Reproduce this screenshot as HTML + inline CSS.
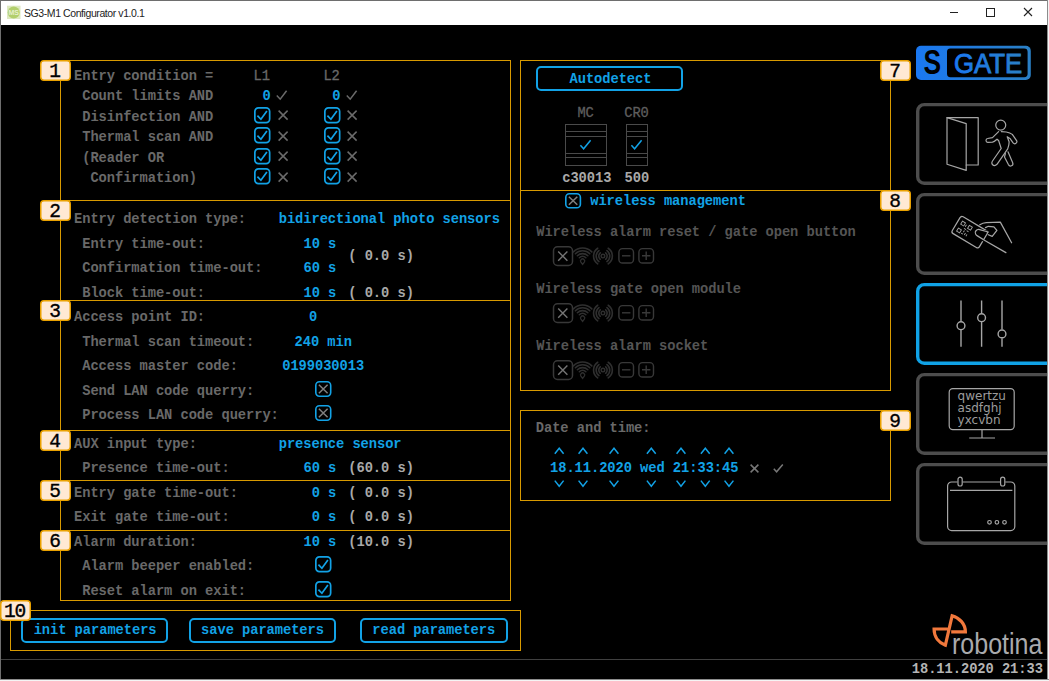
<!DOCTYPE html>
<html><head><meta charset="utf-8"><title>SG3-M1 Configurator v1.0.1</title>
<style>
html,body{margin:0;padding:0;}
body{width:1049px;height:681px;background:#000;position:relative;overflow:hidden;font-family:"Liberation Mono",monospace;}
#frame{position:absolute;left:0;top:0;width:1047px;height:679px;overflow:hidden;}
#edge-l{position:absolute;left:0;top:0;width:1px;height:681px;background:#6e6e6e}
#edge-t{position:absolute;left:0;top:0;width:1049px;height:1px;background:#6e6e6e}
#edge-r{position:absolute;left:1047px;top:0;width:1px;height:681px;background:#8c8c8c}
#edge-r2{position:absolute;left:1048px;top:0;width:1px;height:681px;background:#f4f4f4}
#edge-b{position:absolute;left:0;top:679px;width:1049px;height:1px;background:#8c8c8c}
#edge-b2{position:absolute;left:0;top:680px;width:1049px;height:1px;background:#f4f4f4}
#titlebar{position:absolute;left:1px;top:1px;width:1046px;height:24px;background:#fff}
#title{position:absolute;left:24px;top:6px;font:10.5px/14px "Liberation Sans",sans-serif;color:#222;white-space:pre;letter-spacing:-0.42px}
.t{position:absolute;font-size:13.75px;line-height:16px;letter-spacing:-0.06px;white-space:pre;font-family:"Liberation Mono",monospace}
.b{font-weight:bold} .r{font-weight:normal;-webkit-text-stroke:0.3px currentColor}
.p{position:absolute;border:1px solid #d89a00;}
.lb{position:absolute;width:28px;height:16px;padding-top:2px;z-index:5;border:1.5px solid #e9a100;border-radius:3.5px;background:#ffe9d3;color:#000;font:19.5px/19px "Liberation Mono",monospace;text-align:center;-webkit-text-stroke:0.35px #000;}
.i{position:absolute;overflow:visible}
svg.clip{overflow:hidden}
.lbs{z-index:5}
.btn{position:absolute;box-sizing:border-box;border:2px solid #12a2e6;border-radius:5px;color:#12a2e6;font:bold 13.75px/16px "Liberation Mono",monospace;text-align:center;white-space:pre;letter-spacing:-0.06px}
.sb{position:absolute;left:916px;width:140px;height:82px;box-sizing:border-box;border:3.5px solid #4d4d4d;border-radius:9px}
#robotina{position:absolute;left:952px;top:626px;font:28.8px/36px "Liberation Sans",sans-serif;color:#a9aaad;transform-origin:0 0;transform:scaleX(0.869);white-space:pre}
#sline{position:absolute;left:1px;top:659px;width:1046px;height:1px;background:#404040}
</style></head>
<body>
<div id="frame">
<div id="titlebar"></div>
<svg class="i" style="left:7px;top:5px" width="14" height="15" viewBox="0 0 14 15"><rect x="0" y="0.7" width="13.5" height="13.3" fill="#dde9c0"/><circle cx="6.7" cy="7.4" r="6" fill="#b2cf6c"/><text x="6.7" y="10" font-family="Liberation Sans, sans-serif" font-size="7" font-weight="bold" fill="#e6f0cc" text-anchor="middle">MS</text></svg>
<div id="title">SG3-M1 Configurator v1.0.1</div>
<svg class="i" style="left:940px;top:1px" width="107" height="24" viewBox="0 0 107 24"><path d="M10 11.5 H18" stroke="#222" stroke-width="1"/><rect x="46.5" y="7.5" width="8" height="8" fill="none" stroke="#222" stroke-width="1"/><path d="M84 7 L92 15 M92 7 L84 15" stroke="#222" stroke-width="1.1"/></svg>
<div class="p" style="left:60px;top:60px;width:449px;height:139px"></div>
<div class="p" style="left:60px;top:200px;width:449px;height:99px"></div>
<div class="p" style="left:60px;top:300px;width:449px;height:129px"></div>
<div class="p" style="left:60px;top:430px;width:449px;height:49px"></div>
<div class="p" style="left:60px;top:480px;width:449px;height:49px"></div>
<div class="p" style="left:60px;top:530px;width:449px;height:69px"></div>
<div class="p" style="left:10px;top:610px;width:509px;height:39px"></div>
<div class="p" style="left:520px;top:60px;width:369px;height:129px"></div>
<div class="p" style="left:520px;top:190px;width:369px;height:199px"></div>
<div class="p" style="left:520px;top:410px;width:369px;height:89px"></div>
<svg class="i lbs" style="left:40px;top:60px" width="31" height="21" viewBox="0 0 31 21"><rect x="0.75" y="0.75" width="29.5" height="19.5" rx="3.2" fill="#ffe9d3" stroke="#e9a100" stroke-width="1.5"/><text x="15.0" y="17" text-anchor="middle" font-family="Liberation Mono, monospace" font-size="19.5" fill="#000" stroke="#000" stroke-width="0.35">1</text></svg>
<svg class="i lbs" style="left:40px;top:200px" width="31" height="21" viewBox="0 0 31 21"><rect x="0.75" y="0.75" width="29.5" height="19.5" rx="3.2" fill="#ffe9d3" stroke="#e9a100" stroke-width="1.5"/><text x="15.0" y="17" text-anchor="middle" font-family="Liberation Mono, monospace" font-size="19.5" fill="#000" stroke="#000" stroke-width="0.35">2</text></svg>
<svg class="i lbs" style="left:40px;top:300px" width="31" height="21" viewBox="0 0 31 21"><rect x="0.75" y="0.75" width="29.5" height="19.5" rx="3.2" fill="#ffe9d3" stroke="#e9a100" stroke-width="1.5"/><text x="15.0" y="17" text-anchor="middle" font-family="Liberation Mono, monospace" font-size="19.5" fill="#000" stroke="#000" stroke-width="0.35">3</text></svg>
<svg class="i lbs" style="left:40px;top:430px" width="31" height="21" viewBox="0 0 31 21"><rect x="0.75" y="0.75" width="29.5" height="19.5" rx="3.2" fill="#ffe9d3" stroke="#e9a100" stroke-width="1.5"/><text x="15.0" y="17" text-anchor="middle" font-family="Liberation Mono, monospace" font-size="19.5" fill="#000" stroke="#000" stroke-width="0.35">4</text></svg>
<svg class="i lbs" style="left:40px;top:480px" width="31" height="21" viewBox="0 0 31 21"><rect x="0.75" y="0.75" width="29.5" height="19.5" rx="3.2" fill="#ffe9d3" stroke="#e9a100" stroke-width="1.5"/><text x="15.0" y="17" text-anchor="middle" font-family="Liberation Mono, monospace" font-size="19.5" fill="#000" stroke="#000" stroke-width="0.35">5</text></svg>
<svg class="i lbs" style="left:40px;top:530px" width="31" height="21" viewBox="0 0 31 21"><rect x="0.75" y="0.75" width="29.5" height="19.5" rx="3.2" fill="#ffe9d3" stroke="#e9a100" stroke-width="1.5"/><text x="15.0" y="17" text-anchor="middle" font-family="Liberation Mono, monospace" font-size="19.5" fill="#000" stroke="#000" stroke-width="0.35">6</text></svg>
<svg class="i lbs" style="left:880px;top:60px" width="31" height="21" viewBox="0 0 31 21"><rect x="0.75" y="0.75" width="29.5" height="19.5" rx="3.2" fill="#ffe9d3" stroke="#e9a100" stroke-width="1.5"/><text x="15.0" y="17" text-anchor="middle" font-family="Liberation Mono, monospace" font-size="19.5" fill="#000" stroke="#000" stroke-width="0.35">7</text></svg>
<svg class="i lbs" style="left:880px;top:190px" width="31" height="21" viewBox="0 0 31 21"><rect x="0.75" y="0.75" width="29.5" height="19.5" rx="3.2" fill="#ffe9d3" stroke="#e9a100" stroke-width="1.5"/><text x="15.0" y="17" text-anchor="middle" font-family="Liberation Mono, monospace" font-size="19.5" fill="#000" stroke="#000" stroke-width="0.35">8</text></svg>
<svg class="i lbs" style="left:880px;top:410px" width="31" height="21" viewBox="0 0 31 21"><rect x="0.75" y="0.75" width="29.5" height="19.5" rx="3.2" fill="#ffe9d3" stroke="#e9a100" stroke-width="1.5"/><text x="15.0" y="17" text-anchor="middle" font-family="Liberation Mono, monospace" font-size="19.5" fill="#000" stroke="#000" stroke-width="0.35">9</text></svg>
<svg class="i lbs" style="left:0.4px;top:600px" width="31" height="21" viewBox="0 0 31 21"><rect x="0.75" y="0.75" width="29.5" height="19.5" rx="3.2" fill="#ffe9d3" stroke="#e9a100" stroke-width="1.5"/><text x="14.4" y="17" text-anchor="middle" letter-spacing="-1.2" font-family="Liberation Mono, monospace" font-size="19.5" fill="#000" stroke="#000" stroke-width="0.35">10</text></svg>
<div class="t b " style="left:74.00px;top:69px;color:#696969">Entry condition =</div>
<div class="t b " style="left:74.00px;top:89px;color:#696969"> Count limits AND</div>
<div class="t b " style="left:74.00px;top:110px;color:#696969"> Disinfection AND</div>
<div class="t b " style="left:74.00px;top:130px;color:#696969"> Thermal scan AND</div>
<div class="t b " style="left:74.00px;top:151px;color:#696969"> (Reader OR</div>
<div class="t b " style="left:74.00px;top:171px;color:#696969">  Confirmation)</div>
<div class="t r " style="left:253.60px;top:69px;color:#696969">L1</div>
<div class="t r " style="left:323.40px;top:69px;color:#696969">L2</div>
<div class="t b " style="left:262.39px;top:89px;color:#12a2e6">0</div>
<div class="t b " style="left:332.19px;top:89px;color:#12a2e6">0</div>
<svg class="i" style="left:276.4px;top:90.1px" width="12" height="11" viewBox="0 0 12 11"><path d="M0.8 5.6 L4.2 9.2 L10.6 0.8" fill="none" stroke="#6a6a6a" stroke-width="1.5"/></svg>
<svg class="i" style="left:346.2px;top:90.1px" width="12" height="11" viewBox="0 0 12 11"><path d="M0.8 5.6 L4.2 9.2 L10.6 0.8" fill="none" stroke="#6a6a6a" stroke-width="1.5"/></svg>
<svg class="i" style="left:254px;top:107.0px" width="18" height="18" viewBox="0 0 18 18"><rect x="0.85" y="0.85" width="14.8" height="14.8" rx="3.6" fill="none" stroke="#12a2e6" stroke-width="1.7"/><path d="M3.4 8.7 L6.9 12.3 L12.9 3.9" fill="none" stroke="#12a2e6" stroke-width="1.7"/></svg>
<svg class="i" style="left:323.8px;top:107.0px" width="18" height="18" viewBox="0 0 18 18"><rect x="0.85" y="0.85" width="14.8" height="14.8" rx="3.6" fill="none" stroke="#12a2e6" stroke-width="1.7"/><path d="M3.4 8.7 L6.9 12.3 L12.9 3.9" fill="none" stroke="#12a2e6" stroke-width="1.7"/></svg>
<svg class="i" style="left:277.6px;top:110.4px" width="11" height="11" viewBox="0 0 11 11"><path d="M0.6 0.6 L9.6 9.6 M9.6 0.6 L0.6 9.6" fill="none" stroke="#6a6a6a" stroke-width="1.5"/></svg>
<svg class="i" style="left:347.2px;top:110.4px" width="11" height="11" viewBox="0 0 11 11"><path d="M0.6 0.6 L9.6 9.6 M9.6 0.6 L0.6 9.6" fill="none" stroke="#6a6a6a" stroke-width="1.5"/></svg>
<svg class="i" style="left:254px;top:127.4px" width="18" height="18" viewBox="0 0 18 18"><rect x="0.85" y="0.85" width="14.8" height="14.8" rx="3.6" fill="none" stroke="#12a2e6" stroke-width="1.7"/><path d="M3.4 8.7 L6.9 12.3 L12.9 3.9" fill="none" stroke="#12a2e6" stroke-width="1.7"/></svg>
<svg class="i" style="left:323.8px;top:127.4px" width="18" height="18" viewBox="0 0 18 18"><rect x="0.85" y="0.85" width="14.8" height="14.8" rx="3.6" fill="none" stroke="#12a2e6" stroke-width="1.7"/><path d="M3.4 8.7 L6.9 12.3 L12.9 3.9" fill="none" stroke="#12a2e6" stroke-width="1.7"/></svg>
<svg class="i" style="left:277.6px;top:130.8px" width="11" height="11" viewBox="0 0 11 11"><path d="M0.6 0.6 L9.6 9.6 M9.6 0.6 L0.6 9.6" fill="none" stroke="#6a6a6a" stroke-width="1.5"/></svg>
<svg class="i" style="left:347.2px;top:130.8px" width="11" height="11" viewBox="0 0 11 11"><path d="M0.6 0.6 L9.6 9.6 M9.6 0.6 L0.6 9.6" fill="none" stroke="#6a6a6a" stroke-width="1.5"/></svg>
<svg class="i" style="left:254px;top:147.8px" width="18" height="18" viewBox="0 0 18 18"><rect x="0.85" y="0.85" width="14.8" height="14.8" rx="3.6" fill="none" stroke="#12a2e6" stroke-width="1.7"/><path d="M3.4 8.7 L6.9 12.3 L12.9 3.9" fill="none" stroke="#12a2e6" stroke-width="1.7"/></svg>
<svg class="i" style="left:323.8px;top:147.8px" width="18" height="18" viewBox="0 0 18 18"><rect x="0.85" y="0.85" width="14.8" height="14.8" rx="3.6" fill="none" stroke="#12a2e6" stroke-width="1.7"/><path d="M3.4 8.7 L6.9 12.3 L12.9 3.9" fill="none" stroke="#12a2e6" stroke-width="1.7"/></svg>
<svg class="i" style="left:277.6px;top:151.2px" width="11" height="11" viewBox="0 0 11 11"><path d="M0.6 0.6 L9.6 9.6 M9.6 0.6 L0.6 9.6" fill="none" stroke="#6a6a6a" stroke-width="1.5"/></svg>
<svg class="i" style="left:347.2px;top:151.2px" width="11" height="11" viewBox="0 0 11 11"><path d="M0.6 0.6 L9.6 9.6 M9.6 0.6 L0.6 9.6" fill="none" stroke="#6a6a6a" stroke-width="1.5"/></svg>
<svg class="i" style="left:254px;top:168.2px" width="18" height="18" viewBox="0 0 18 18"><rect x="0.85" y="0.85" width="14.8" height="14.8" rx="3.6" fill="none" stroke="#12a2e6" stroke-width="1.7"/><path d="M3.4 8.7 L6.9 12.3 L12.9 3.9" fill="none" stroke="#12a2e6" stroke-width="1.7"/></svg>
<svg class="i" style="left:323.8px;top:168.2px" width="18" height="18" viewBox="0 0 18 18"><rect x="0.85" y="0.85" width="14.8" height="14.8" rx="3.6" fill="none" stroke="#12a2e6" stroke-width="1.7"/><path d="M3.4 8.7 L6.9 12.3 L12.9 3.9" fill="none" stroke="#12a2e6" stroke-width="1.7"/></svg>
<svg class="i" style="left:277.6px;top:171.6px" width="11" height="11" viewBox="0 0 11 11"><path d="M0.6 0.6 L9.6 9.6 M9.6 0.6 L0.6 9.6" fill="none" stroke="#6a6a6a" stroke-width="1.5"/></svg>
<svg class="i" style="left:347.2px;top:171.6px" width="11" height="11" viewBox="0 0 11 11"><path d="M0.6 0.6 L9.6 9.6 M9.6 0.6 L0.6 9.6" fill="none" stroke="#6a6a6a" stroke-width="1.5"/></svg>
<div class="t b " style="left:74.00px;top:212px;color:#696969">Entry detection type:</div>
<div class="t b " style="left:74.00px;top:237px;color:#696969"> Entry time-out:</div>
<div class="t b " style="left:74.00px;top:261px;color:#696969"> Confirmation time-out:</div>
<div class="t b " style="left:74.00px;top:286px;color:#696969"> Block time-out:</div>
<div class="t b " style="left:278.70px;top:212px;color:#12a2e6">bidirectional photo sensors</div>
<div class="t b " style="left:303.47px;top:237px;color:#12a2e6">10 s</div>
<div class="t b " style="left:303.47px;top:261px;color:#12a2e6">60 s</div>
<div class="t b " style="left:303.47px;top:286px;color:#12a2e6">10 s</div>
<div class="t b " style="left:348.30px;top:249px;color:#a9a9a9">( 0.0 s)</div>
<div class="t b " style="left:348.30px;top:286px;color:#a9a9a9">( 0.0 s)</div>
<div class="t b " style="left:74.00px;top:310px;color:#696969">Access point ID:</div>
<div class="t b " style="left:74.00px;top:335px;color:#696969"> Thermal scan timeout:</div>
<div class="t b " style="left:74.00px;top:359px;color:#696969"> Access master code:</div>
<div class="t b " style="left:74.00px;top:384px;color:#696969"> Send LAN code querry:</div>
<div class="t b " style="left:74.00px;top:408px;color:#696969"> Process LAN code querry:</div>
<div class="t b " style="left:309.00px;top:310px;color:#12a2e6">0</div>
<div class="t b " style="left:294.60px;top:335px;color:#12a2e6">240 min</div>
<div class="t b " style="left:282.20px;top:359px;color:#12a2e6">0199030013</div>
<svg class="i" style="left:315.4px;top:381.2px" width="18" height="18" viewBox="0 0 18 18"><rect x="0.8" y="0.8" width="14.9" height="14.4" rx="3.6" fill="none" stroke="#12a2e6" stroke-width="1.6"/><path d="M3.9 3.8 L12.6 12.2 M12.6 3.8 L3.9 12.2" fill="none" stroke="#808080" stroke-width="1.5"/></svg>
<svg class="i" style="left:315.4px;top:405.2px" width="18" height="18" viewBox="0 0 18 18"><rect x="0.8" y="0.8" width="14.9" height="14.4" rx="3.6" fill="none" stroke="#12a2e6" stroke-width="1.6"/><path d="M3.9 3.8 L12.6 12.2 M12.6 3.8 L3.9 12.2" fill="none" stroke="#808080" stroke-width="1.5"/></svg>
<div class="t b " style="left:74.00px;top:437px;color:#696969">AUX input type:</div>
<div class="t b " style="left:74.00px;top:461px;color:#696969"> Presence time-out:</div>
<div class="t b " style="left:74.00px;top:486px;color:#696969">Entry gate time-out:</div>
<div class="t b " style="left:74.00px;top:510px;color:#696969">Exit gate time-out:</div>
<div class="t b " style="left:74.00px;top:535px;color:#696969">Alarm duration:</div>
<div class="t b " style="left:74.00px;top:559px;color:#696969"> Alarm beeper enabled:</div>
<div class="t b " style="left:74.00px;top:584px;color:#696969"> Reset alarm on exit:</div>
<div class="t b " style="left:278.70px;top:437px;color:#12a2e6">presence sensor</div>
<div class="t b " style="left:303.47px;top:461px;color:#12a2e6">60 s</div>
<div class="t b " style="left:303.47px;top:486px;color:#12a2e6"> 0 s</div>
<div class="t b " style="left:303.47px;top:510px;color:#12a2e6"> 0 s</div>
<div class="t b " style="left:303.47px;top:535px;color:#12a2e6">10 s</div>
<div class="t b " style="left:348.30px;top:461px;color:#a9a9a9">(60.0 s)</div>
<div class="t b " style="left:348.30px;top:486px;color:#a9a9a9">( 0.0 s)</div>
<div class="t b " style="left:348.30px;top:510px;color:#a9a9a9">( 0.0 s)</div>
<div class="t b " style="left:348.30px;top:535px;color:#a9a9a9">(10.0 s)</div>
<svg class="i" style="left:315.4px;top:556.2px" width="18" height="18" viewBox="0 0 18 18"><rect x="0.85" y="0.85" width="14.8" height="14.8" rx="3.6" fill="none" stroke="#12a2e6" stroke-width="1.7"/><path d="M3.4 8.7 L6.9 12.3 L12.9 3.9" fill="none" stroke="#12a2e6" stroke-width="1.7"/></svg>
<svg class="i" style="left:315.4px;top:580.7px" width="18" height="18" viewBox="0 0 18 18"><rect x="0.85" y="0.85" width="14.8" height="14.8" rx="3.6" fill="none" stroke="#12a2e6" stroke-width="1.7"/><path d="M3.4 8.7 L6.9 12.3 L12.9 3.9" fill="none" stroke="#12a2e6" stroke-width="1.7"/></svg>
<div class="btn" style="left:21px;top:618px;width:147px;height:25px;padding-top:3px;padding-left:1.2px">init parameters</div>
<div class="btn" style="left:189px;top:618px;width:147px;height:25px;padding-top:3px;padding-left:0px">save parameters</div>
<div class="btn" style="left:360px;top:618px;width:147.5px;height:25px;padding-top:3px;padding-left:0px">read parameters</div>
<div class="btn" style="left:536px;top:66px;width:147px;height:25px;padding-top:4px;padding-left:2px">Autodetect</div>
<div class="t r " style="left:577.40px;top:106px;color:#5e5e5e">MC</div>
<div class="t r " style="left:624.20px;top:106px;color:#5e5e5e">CR0</div>
<svg class="i" style="left:565px;top:120px" width="44" height="50" viewBox="0 0 44 50"><rect x="0.5" y="4.5" width="41" height="41" fill="none" stroke="#4a4a4a" stroke-width="1"/><path d="M0.5 11.5 H41.5" stroke="#4a4a4a" stroke-width="1"/><path d="M0.5 16.5 H41.5" stroke="#4a4a4a" stroke-width="1"/><path d="M0.5 33.5 H41.5" stroke="#4a4a4a" stroke-width="1"/><path d="M0.5 37.5 H41.5" stroke="#4a4a4a" stroke-width="1"/><path d="M15.4 25.30000000000001 L18.6 28.80000000000001 L25.6 20.19999999999999" fill="none" stroke="#12a2e6" stroke-width="1.5"/></svg>
<svg class="i" style="left:626px;top:120px" width="24" height="50" viewBox="0 0 24 50"><rect x="0.5" y="4.5" width="21" height="41" fill="none" stroke="#4a4a4a" stroke-width="1"/><path d="M0.5 11.5 H21.5" stroke="#4a4a4a" stroke-width="1"/><path d="M0.5 16.5 H21.5" stroke="#4a4a4a" stroke-width="1"/><path d="M0.5 33.5 H21.5" stroke="#4a4a4a" stroke-width="1"/><path d="M0.5 37.5 H21.5" stroke="#4a4a4a" stroke-width="1"/><path d="M5.4 25.30000000000001 L8.6 28.80000000000001 L15.6 20.19999999999999" fill="none" stroke="#12a2e6" stroke-width="1.5"/></svg>
<div class="t b " style="left:562.20px;top:171px;color:#a9a9a9">c30013</div>
<div class="t b " style="left:624.60px;top:171px;color:#a9a9a9">500</div>
<svg class="i" style="left:565.2px;top:193.4px" width="18" height="18" viewBox="0 0 18 18"><rect x="0.8" y="0.8" width="14.6" height="14.0" rx="3.6" fill="none" stroke="#12a2e6" stroke-width="1.6"/><path d="M3.9 3.8 L12.299999999999999 11.8 M12.299999999999999 3.8 L3.9 11.8" fill="none" stroke="#808080" stroke-width="1.5"/></svg>
<div class="t b " style="left:590.20px;top:194px;color:#12a2e6">wireless management</div>
<div class="t b " style="left:536.20px;top:225px;color:#555555">Wireless alarm reset / gate open button</div>
<div class="t b " style="left:536.20px;top:282px;color:#555555">Wireless gate open module</div>
<div class="t b " style="left:536.20px;top:339px;color:#555555">Wireless alarm socket</div>
<svg class="i" style="left:552px;top:246px" width="106" height="21" viewBox="0 0 106 21"><rect x="1.5" y="0.8" width="19" height="18.6" rx="4" fill="none" stroke="#383838" stroke-width="1.5"/><path d="M6.2 5.4 L15.4 14.8 M15.4 5.4 L6.2 14.8" stroke="#747474" stroke-width="1.4" fill="none"/><g fill="none" stroke="#2f2f2f" stroke-width="1.6" stroke-linecap="round"><path d="M21.41 5.81 A13.0 13.0 0 0 1 39.79 5.81"/><path d="M23.39 7.79 A10.2 10.2 0 0 1 37.81 7.79"/><path d="M25.37 9.77 A7.4 7.4 0 0 1 35.83 9.77"/><path d="M27.35 11.75 A4.6 4.6 0 0 1 33.85 11.75"/><path d="M30.6 18.4 L28.900000000000002 16.2 A2.1 2.1 0 1 1 32.300000000000004 16.2 Z" stroke-width="1.3"/><circle cx="50.95" cy="10.05" r="1.8" stroke-width="1.4"/><path d="M48.25 6.83 A4.2 4.2 0 0 0 48.25 13.27"/><path d="M53.65 6.83 A4.2 4.2 0 0 1 53.65 13.27"/><path d="M46.95 4.55 A6.8 6.8 0 0 0 46.95 15.55"/><path d="M54.95 4.55 A6.8 6.8 0 0 1 54.95 15.55"/><path d="M45.69 2.26 A9.4 9.4 0 0 0 45.69 17.84"/><path d="M56.21 2.26 A9.4 9.4 0 0 1 56.21 17.84"/></g><rect x="66.9" y="2.6" width="14.6" height="14.4" rx="3.6" fill="none" stroke="#383838" stroke-width="1.4"/><path d="M70 9.8 H78.4" stroke="#383838" stroke-width="1.4"/><rect x="86.9" y="2.6" width="14.6" height="14.4" rx="3.6" fill="none" stroke="#383838" stroke-width="1.4"/><path d="M90 9.8 H98.4 M94.2 5.6 V14" stroke="#383838" stroke-width="1.4"/></svg>
<svg class="i" style="left:552px;top:303.2px" width="106" height="21" viewBox="0 0 106 21"><rect x="1.5" y="0.8" width="19" height="18.6" rx="4" fill="none" stroke="#383838" stroke-width="1.5"/><path d="M6.2 5.4 L15.4 14.8 M15.4 5.4 L6.2 14.8" stroke="#747474" stroke-width="1.4" fill="none"/><g fill="none" stroke="#2f2f2f" stroke-width="1.6" stroke-linecap="round"><path d="M21.41 5.81 A13.0 13.0 0 0 1 39.79 5.81"/><path d="M23.39 7.79 A10.2 10.2 0 0 1 37.81 7.79"/><path d="M25.37 9.77 A7.4 7.4 0 0 1 35.83 9.77"/><path d="M27.35 11.75 A4.6 4.6 0 0 1 33.85 11.75"/><path d="M30.6 18.4 L28.900000000000002 16.2 A2.1 2.1 0 1 1 32.300000000000004 16.2 Z" stroke-width="1.3"/><circle cx="50.95" cy="10.05" r="1.8" stroke-width="1.4"/><path d="M48.25 6.83 A4.2 4.2 0 0 0 48.25 13.27"/><path d="M53.65 6.83 A4.2 4.2 0 0 1 53.65 13.27"/><path d="M46.95 4.55 A6.8 6.8 0 0 0 46.95 15.55"/><path d="M54.95 4.55 A6.8 6.8 0 0 1 54.95 15.55"/><path d="M45.69 2.26 A9.4 9.4 0 0 0 45.69 17.84"/><path d="M56.21 2.26 A9.4 9.4 0 0 1 56.21 17.84"/></g><rect x="66.9" y="2.6" width="14.6" height="14.4" rx="3.6" fill="none" stroke="#383838" stroke-width="1.4"/><path d="M70 9.8 H78.4" stroke="#383838" stroke-width="1.4"/><rect x="86.9" y="2.6" width="14.6" height="14.4" rx="3.6" fill="none" stroke="#383838" stroke-width="1.4"/><path d="M90 9.8 H98.4 M94.2 5.6 V14" stroke="#383838" stroke-width="1.4"/></svg>
<svg class="i" style="left:552px;top:360.4px" width="106" height="21" viewBox="0 0 106 21"><rect x="1.5" y="0.8" width="19" height="18.6" rx="4" fill="none" stroke="#383838" stroke-width="1.5"/><path d="M6.2 5.4 L15.4 14.8 M15.4 5.4 L6.2 14.8" stroke="#747474" stroke-width="1.4" fill="none"/><g fill="none" stroke="#2f2f2f" stroke-width="1.6" stroke-linecap="round"><path d="M21.41 5.81 A13.0 13.0 0 0 1 39.79 5.81"/><path d="M23.39 7.79 A10.2 10.2 0 0 1 37.81 7.79"/><path d="M25.37 9.77 A7.4 7.4 0 0 1 35.83 9.77"/><path d="M27.35 11.75 A4.6 4.6 0 0 1 33.85 11.75"/><path d="M30.6 18.4 L28.900000000000002 16.2 A2.1 2.1 0 1 1 32.300000000000004 16.2 Z" stroke-width="1.3"/><circle cx="50.95" cy="10.05" r="1.8" stroke-width="1.4"/><path d="M48.25 6.83 A4.2 4.2 0 0 0 48.25 13.27"/><path d="M53.65 6.83 A4.2 4.2 0 0 1 53.65 13.27"/><path d="M46.95 4.55 A6.8 6.8 0 0 0 46.95 15.55"/><path d="M54.95 4.55 A6.8 6.8 0 0 1 54.95 15.55"/><path d="M45.69 2.26 A9.4 9.4 0 0 0 45.69 17.84"/><path d="M56.21 2.26 A9.4 9.4 0 0 1 56.21 17.84"/></g><rect x="66.9" y="2.6" width="14.6" height="14.4" rx="3.6" fill="none" stroke="#383838" stroke-width="1.4"/><path d="M70 9.8 H78.4" stroke="#383838" stroke-width="1.4"/><rect x="86.9" y="2.6" width="14.6" height="14.4" rx="3.6" fill="none" stroke="#383838" stroke-width="1.4"/><path d="M90 9.8 H98.4 M94.2 5.6 V14" stroke="#383838" stroke-width="1.4"/></svg>
<div class="t b " style="left:535.80px;top:421px;color:#696969">Date and time:</div>
<div class="t b " style="left:550.00px;top:461px;color:#12a2e6">18.11.2020 wed 21:33:45</div>
<svg class="i" style="left:540px;top:440px" width="220" height="52" viewBox="0 0 220 52"><g fill="none" stroke="#12a2e6" stroke-width="1.5"><path d="M14.8 13.8 L19.2 8.2 L23.6 13.8"/><path d="M14.8 40.6 L19.2 46.2 L23.6 40.6"/><path d="M38.6 13.8 L43.0 8.2 L47.4 13.8"/><path d="M38.6 40.6 L43.0 46.2 L47.4 40.6"/><path d="M69.6 13.8 L74.0 8.2 L78.4 13.8"/><path d="M69.6 40.6 L74.0 46.2 L78.4 40.6"/><path d="M106.9 13.8 L111.3 8.2 L115.7 13.8"/><path d="M106.9 40.6 L111.3 46.2 L115.7 40.6"/><path d="M136.6 13.8 L141.0 8.2 L145.4 13.8"/><path d="M136.6 40.6 L141.0 46.2 L145.4 40.6"/><path d="M160.9 13.8 L165.3 8.2 L169.7 13.8"/><path d="M160.9 40.6 L165.3 46.2 L169.7 40.6"/><path d="M184.6 13.8 L189.0 8.2 L193.4 13.8"/><path d="M184.6 40.6 L189.0 46.2 L193.4 40.6"/></g></svg>
<svg class="i" style="left:750px;top:464.2px" width="11" height="11" viewBox="0 0 11 11"><path d="M0.6 0.6 L8.4 8.4 M8.4 0.6 L0.6 8.4" fill="none" stroke="#777" stroke-width="1.5"/></svg>
<svg class="i" style="left:773px;top:463px" width="12" height="11" viewBox="0 0 12 11"><path d="M0.8 5.8 L3.6 8.8 L9.8 1.4" fill="none" stroke="#777" stroke-width="1.5"/></svg>
<svg class="i" style="left:914px;top:43px" width="120" height="40" viewBox="0 0 120 40">
<defs><linearGradient id="lg" x1="0" x2="1" y1="0" y2="0"><stop offset="0" stop-color="#1a78f2"/><stop offset="1" stop-color="#2a7fc4"/></linearGradient></defs>
<rect x="2" y="2.8" width="114.8" height="34.2" rx="5" fill="url(#lg)"/>
<rect x="33" y="5.4" width="80.6" height="28.8" rx="3.4" fill="#000"/>
<text x="9.6" y="31.3" font-family="Liberation Sans, sans-serif" font-weight="bold" font-size="34.6" textLength="17.6" lengthAdjust="spacingAndGlyphs" fill="#000">S</text>
<text x="40" y="30.2" font-family="Liberation Sans, sans-serif" font-size="28" fill="url(#lg)" textLength="68.2" lengthAdjust="spacingAndGlyphs" stroke="url(#lg)" stroke-width="0.9">GATE</text>
</svg>
<svg class="i" style="left:916px;top:103px" width="131" height="82" viewBox="0 0 131 82"><rect x="1.7" y="1.6" width="160" height="78.7" rx="6.6" fill="none" stroke="#4d4d4d" stroke-width="3.4"/></svg>
<svg class="i" style="left:916px;top:193px" width="131" height="82" viewBox="0 0 131 82"><rect x="1.7" y="1.6" width="160" height="78.7" rx="6.6" fill="none" stroke="#4d4d4d" stroke-width="3.4"/></svg>
<svg class="i" style="left:916px;top:283px" width="131" height="82" viewBox="0 0 131 82"><rect x="1.7" y="1.6" width="160" height="78.7" rx="6.6" fill="none" stroke="#10a2e6" stroke-width="3.4"/></svg>
<svg class="i" style="left:916px;top:373px" width="131" height="82" viewBox="0 0 131 82"><rect x="1.7" y="1.6" width="160" height="78.7" rx="6.6" fill="none" stroke="#4d4d4d" stroke-width="3.4"/></svg>
<svg class="i" style="left:916px;top:463px" width="131" height="82" viewBox="0 0 131 82"><rect x="1.7" y="1.6" width="160" height="78.7" rx="6.6" fill="none" stroke="#4d4d4d" stroke-width="3.4"/></svg>
<svg class="i" style="left:940px;top:110px" width="80" height="66" viewBox="0 0 80 66"><g fill="none" stroke="#a6a6a6" stroke-width="1.2" stroke-linejoin="round" stroke-linecap="round">
<path d="M7 7.6 H38.2 V55 H26.2"/>
<path d="M7 7.6 L26.2 13.6 V60.4 L7 54.2 Z"/>
<circle cx="60.75" cy="15.1" r="5"/>
<path d="M58.6 21.6 L52.5 27.6 L47.6 28.5 C45.4 28.8 45.5 32.3 47.7 32.4 L52.5 32.1 C54.5 31.6 55.8 30.2 57 29.2 L58.6 30.5 L61.2 38.5 L52.5 51 C50.6 53.8 53.6 56.8 56 55 L57 54.3 L67.7 38.9 C68.6 36.5 69.2 34 69.1 31.7 L67.2 26.7 L69.9 28.4 L73.1 32.9 C74.8 34.8 77.8 33 76.6 30.6 L72.3 24.4 C70.6 23 68.6 22.4 66.2 22 L61.4 21.6"/>
<path d="M68 41.8 L72.7 52.7 C73.8 55.8 69.9 57.2 68.4 54.6 L64.5 47 L65.4 43.6"/>
</g></svg>
<svg class="i" style="left:940px;top:200px" width="80" height="66" viewBox="0 0 80 66"><g fill="none" stroke="#a6a6a6" stroke-width="1.25" stroke-linejoin="round" stroke-linecap="round">
<rect x="0" y="0" width="31.6" height="19.6" rx="2.3" transform="translate(21.2 15.6) rotate(30.8)"/>
<path d="M39.8 24.8 C42 23.4 44 22.8 46.2 22.7 L60.3 22.1 L71.6 42.8"/>
<path d="M48.3 32 L39.6 29.6 C36.6 28.8 34.2 32 35.6 34 C36 34.8 36.6 35.4 37.4 35.9 L44.4 40.3 L65.9 52.6 L66 53.4 L44 42 L36 37.4 L34.4 33 L37 29 L48.6 30.6 Z" fill="#000" stroke="none"/>
<path d="M48.3 32 L39.6 29.6 C36.6 28.8 34.2 32 35.6 34 C36 34.8 36.6 35.4 37.4 35.9 L44.4 40.3 L65.9 52.6"/>
<path d="M45.5 27.6 L48.3 26.3 L53.9 26.9 L56.9 30.4 L52.2 36.4 L48.3 34.7"/>
</g><g fill="none" stroke="#a6a6a6" stroke-width="0.9" transform="translate(22.5 21.2) rotate(30.8)">
<rect x="0" y="0" width="3.5" height="3.5"/><rect x="8" y="0" width="3.5" height="3.5"/><rect x="0" y="8" width="3.5" height="3.5"/><path d="M5.2 1 V3.4 M5 5.4 H7.4 M6.4 7 V9 M8.4 6 H10.6 M8.6 8.6 V11 M10.6 9 V11.2 M5 11 H7"/>
</g></svg>
<svg class="i" style="left:940px;top:290px" width="80" height="66" viewBox="0 0 80 66"><g fill="none" stroke="#a6a6a6" stroke-width="1.4">
<path d="M21 10.6 V31.4 M21 40 V56.8"/><circle cx="21" cy="35.7" r="3.9"/>
<path d="M41.6 10.6 V23.4 M41.6 32 V56.8"/><circle cx="41.6" cy="27.7" r="3.9"/>
<path d="M62 10.6 V39.6 M62 48.2 V56.8"/><circle cx="62" cy="43.9" r="3.9"/>
</g></svg>
<svg class="i" style="left:940px;top:380px" width="80" height="66" viewBox="0 0 80 66"><g fill="none" stroke="#a6a6a6" stroke-width="1.2">
<rect x="9.2" y="8.6" width="65" height="41" rx="3.6"/><path d="M42 49.6 V58 M29.2 58 H55"/></g>
<g font-family="DejaVu Sans, sans-serif" font-size="12" fill="#9c9c9c"><text x="17.6" y="19.6">qwertzu</text><text x="17.6" y="31.8">asdfghj</text><text x="17.6" y="44">yxcvbn</text></g>
</svg>
<svg class="i" style="left:940px;top:470px" width="80" height="66" viewBox="0 0 80 66"><g fill="none" stroke="#a6a6a6" stroke-width="1.2">
<path d="M17.6 12 H11.6 C9.4 12 7.6 13.8 7.6 16 V56.6 C7.6 58.8 9.4 60.6 11.6 60.6 H70.8 C73 60.6 74.8 58.8 74.8 56.6 V16 C74.8 13.8 73 12 70.8 12 H65.2 M22.6 12 H60.2"/>
<path d="M10 20.4 H72.4"/>
<rect x="18" y="7.2" width="4.2" height="8.8" rx="2.1"/><rect x="60.6" y="7.2" width="4.2" height="8.8" rx="2.1"/>
<circle cx="49.5" cy="52.3" r="1.8"/><circle cx="56.9" cy="52.3" r="1.8"/><circle cx="64.5" cy="52.3" r="1.8"/>
</g></svg>
<svg class="i" style="left:928px;top:610px" width="44" height="40" viewBox="0 0 44 40"><path d="M19.64 19 L6.07 19 C6.07 27.07 10.92 32.88 17.38 35.14 L24.16 5.75 C31.59 7.69 37.4 14.15 37.4 21.9 L23.19 21.9" fill="none" stroke="#f1783c" stroke-width="3.2" stroke-linejoin="miter" stroke-miterlimit="6"/></svg>
<div id="robotina">robotina</div>
<div id="sline"></div>
<div class="t b " style="left:911.80px;top:662px;color:#b4b4b4">18.11.2020 21:33</div>
</div>
<div id="edge-l"></div><div id="edge-t"></div><div id="edge-r"></div><div id="edge-r2"></div><div id="edge-b"></div><div id="edge-b2"></div>
</body></html>
